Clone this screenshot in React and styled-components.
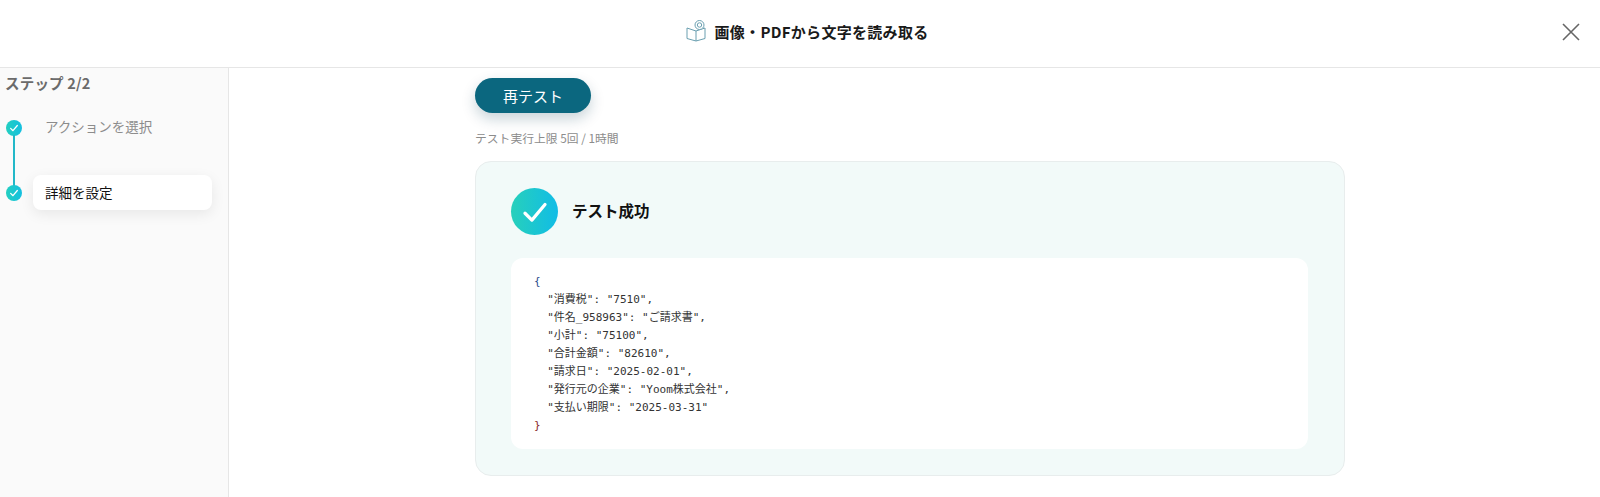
import styled, { createGlobalStyle } from "styled-components";

const FONT = `"Noto Sans CJK JP", "Noto Sans", sans-serif`;

const GlobalStyle = createGlobalStyle`
  html, body {
    margin: 0;
    padding: 0;
    height: 100%;
    background: #fff;
    font-family: ${FONT};
  }
  * {
    box-sizing: border-box;
  }
`;

const Page = styled.div`
  width: 1600px;
  height: 497px;
  display: flex;
  flex-direction: column;
  overflow: hidden;
`;

const Header = styled.header`
  height: 68px;
  flex-shrink: 0;
  display: flex;
  align-items: center;
  justify-content: center;
  gap: 8px;
  padding: 0 0 5px 14px;
  border-bottom: 1px solid #e6e6e6;
  position: relative;
`;

const HeaderTitle = styled.h1`
  margin: 0;
  font-size: 15px;
  font-weight: 700;
  letter-spacing: 0.3px;
  color: #1a1a1a;
`;

const CloseButton = styled.button`
  position: absolute;
  top: 22px;
  right: 19px;
  width: 20px;
  height: 20px;
  padding: 0;
  border: 0;
  background: none;
`;

const Body = styled.div`
  flex: 1;
  display: flex;
  min-height: 0;
`;

const Sidebar = styled.aside`
  width: 229px;
  flex-shrink: 0;
  background: #fafafa;
  border-right: 1px solid #e6e6e6;
  padding: 5px 16px 0 6px;
`;

const StepCount = styled.div`
  font-size: 14.5px;
  font-weight: 700;
  line-height: 20px;
  letter-spacing: 0.2px;
  color: #6b6b6b;
  margin: 0 0 17px -1px;
`;

const StepList = styled.div`
  display: flex;
  flex-direction: column;
  gap: 30px;
`;

const StepRow = styled.div`
  display: flex;
  align-items: center;
  gap: 11px;
  position: relative;
`;

const StepLine = styled.span`
  position: absolute;
  left: 7px;
  top: 25px;
  width: 2px;
  height: 51px;
  background: #22b8c8;
`;

const StepDot = styled.span`
  width: 16px;
  height: 16px;
  flex-shrink: 0;
  border-radius: 50%;
  background: linear-gradient(90deg, #23cfc0, #14bfe0);
  display: flex;
  align-items: center;
  justify-content: center;
`;

const StepLabel = styled.div`
  width: 181px;
  height: 35px;
  padding: 0 0 ${(p) => (p.$active ? "2px" : "4px")} 12px;
  display: flex;
  align-items: center;
  border-radius: 8px;
  font-size: 13.5px;
  color: ${(p) => (p.$active ? "#111" : "#8c8c8c")};
  background: ${(p) => (p.$active ? "#fff" : "transparent")};
  box-shadow: ${(p) => (p.$active ? "0 4px 14px rgba(0, 0, 0, 0.08)" : "none")};
`;

const Main = styled.main`
  flex: 1;
  padding: 10px 0 0 246px;
`;

const RetestButton = styled.button`
  display: block;
  width: 116px;
  height: 35px;
  border: 0;
  border-radius: 18px;
  background: #0b677f;
  color: #fff;
  font-family: ${FONT};
  font-size: 15px;
  box-shadow: 0 6px 14px rgba(11, 60, 80, 0.22);
`;

const LimitNote = styled.p`
  margin: 16px 0 14px;
  font-size: 11.8px;
  line-height: 18px;
  color: #8c8c8c;
`;

const ResultCard = styled.section`
  width: 870px;
  height: 315px;
  padding: 26px 35px 0;
  background: #f2faf9;
  border: 1px solid #e8eded;
  border-radius: 16px;
`;

const ResultHead = styled.div`
  display: flex;
  align-items: center;
  gap: 14px;
  margin-bottom: 23px;
`;

const SuccessBadge = styled.span`
  width: 47px;
  height: 47px;
  border-radius: 50%;
  background: linear-gradient(90deg, #27d0bb, #11bce6);
  display: flex;
  align-items: center;
  justify-content: center;
`;

const ResultTitle = styled.h2`
  margin: 0 0 4px;
  font-size: 15.5px;
  font-weight: 700;
  color: #111;
`;

const CodeBlock = styled.pre`
  margin: 0;
  width: 797px;
  height: 191px;
  padding: 15px 23px;
  background: #fff;
  border-radius: 12px;
  font-family: "DejaVu Sans Mono", "Noto Sans CJK JP", monospace;
  font-size: 11px;
  line-height: 18px;
  color: #333;
`;

const Brace = styled.span`
  color: ${(p) => p.$color};
`;

const Check = ({ size, width }) => (
  <svg width={size} height={size} viewBox="0 0 24 24" fill="none" stroke="#fff" strokeWidth={width} strokeLinecap="round" strokeLinejoin="round">
    <path d="M4 13l5.5 5.5L20 6" />
  </svg>
);

const BookIcon = () => (
  <svg width="21" height="22" viewBox="0 0 21 22" fill="none" stroke="#6a9fb0" strokeWidth="1">
    <path d="M1 8L10 11L19 8V18.5L10 21L1 18.5Z" fill="#fff" />
    <path d="M10 11V21" />
    <circle cx="13.5" cy="5" r="4.5" fill="#fff" />
    <circle cx="13.5" cy="5" r="2.2" />
  </svg>
);

const lines = [
  `  "消費税": "7510",`,
  `  "件名_958963": "ご請求書",`,
  `  "小計": "75100",`,
  `  "合計金額": "82610",`,
  `  "請求日": "2025-02-01",`,
  `  "発行元の企業": "Yoom株式会社",`,
  `  "支払い期限": "2025-03-31"`,
];

export default function App() {
  return (
    <>
      <GlobalStyle />
      <Page>
        <Header>
          <BookIcon />
          <HeaderTitle>画像・PDFから文字を読み取る</HeaderTitle>
          <CloseButton aria-label="閉じる">
            <svg width="20" height="20" viewBox="0 0 20 20" stroke="#666" strokeWidth="1.6" fill="none">
              <path d="M2 2L18 18M18 2L2 18" />
            </svg>
          </CloseButton>
        </Header>
        <Body>
          <Sidebar>
            <StepCount>ステップ 2/2</StepCount>
            <StepList>
              <StepRow>
                <StepDot><Check size={10} width={3} /></StepDot>
                <StepLabel>アクションを選択</StepLabel>
                <StepLine />
              </StepRow>
              <StepRow>
                <StepDot><Check size={10} width={3} /></StepDot>
                <StepLabel $active>詳細を設定</StepLabel>
              </StepRow>
            </StepList>
          </Sidebar>
          <Main>
            <RetestButton>再テスト</RetestButton>
            <LimitNote>テスト実行上限 5回 / 1時間</LimitNote>
            <ResultCard>
              <ResultHead>
                <SuccessBadge><Check size={30} width={2.6} /></SuccessBadge>
                <ResultTitle>テスト成功</ResultTitle>
              </ResultHead>
              <CodeBlock>
                <Brace $color="#2a4a8a">{"{"}</Brace>
                {"\n" + lines.join("\n") + "\n"}
                <Brace $color="#8a2a2a">{"}"}</Brace>
              </CodeBlock>
            </ResultCard>
          </Main>
        </Body>
      </Page>
    </>
  );
}
